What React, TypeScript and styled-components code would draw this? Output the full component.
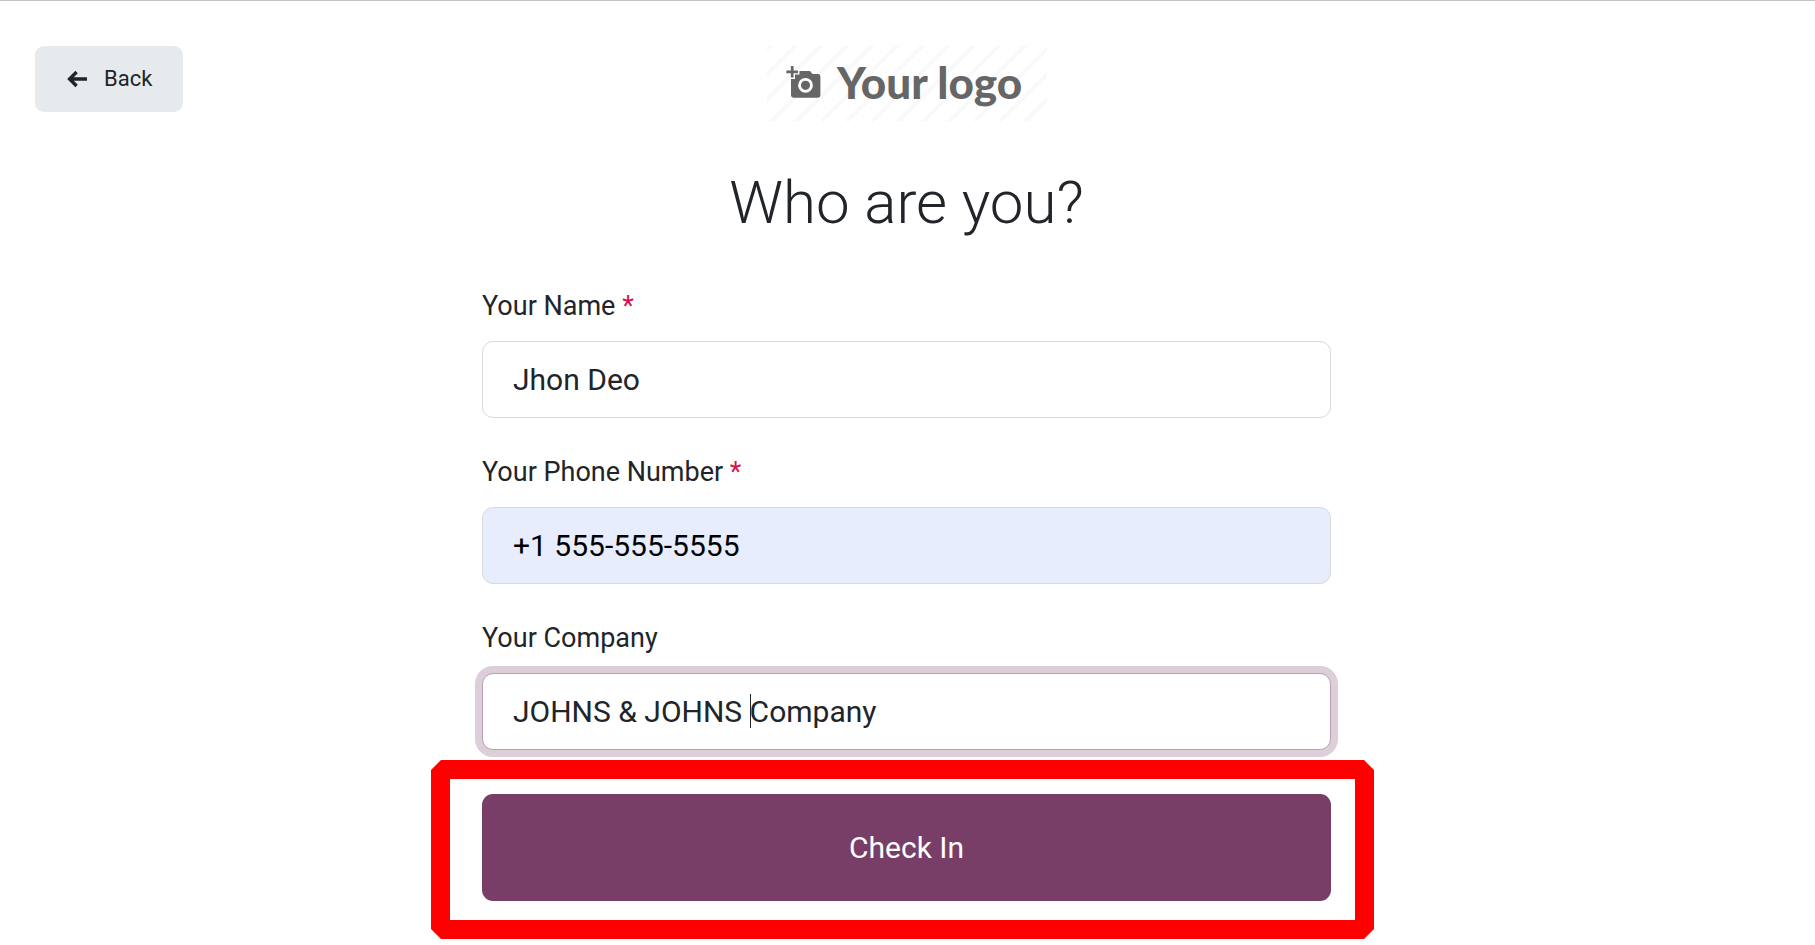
import React, { useEffect, useRef, useState } from "react";
import styled, { createGlobalStyle } from "styled-components";

const GlobalStyle = createGlobalStyle`
  *, *::before, *::after { box-sizing: border-box; }
  body {
    margin: 0;
    background: #fff;
    color: #212529;
    font-family: Roboto, "Noto Sans", sans-serif;
  }
  button, input { font-family: inherit; }
`;

const Page = styled.div`
  min-height: 100vh;
  border-top: 1px solid #c2c2c2;
  padding: 45px 37px 44px 35px;
`;

const Header = styled.header`
  display: grid;
  grid-template-columns: 1fr auto 1fr;
  align-items: start;
`;

const BackButton = styled.button`
  justify-self: start;
  display: flex;
  align-items: center;
  gap: 16px;
  height: 66px;
  padding: 0 31px;
  border: 0;
  border-radius: 9px;
  background: #e7eaed;
  color: #212529;
  font-size: 22px;
  line-height: 32px;
  cursor: pointer;
`;

const Logo = styled.div`
  display: flex;
  align-items: center;
  justify-content: center;
  gap: 16px;
  width: 280px;
  height: 75px;
  padding: 0 6px 4px 0;
  background: repeating-linear-gradient(135deg, #f9f9f9 0 4px, transparent 4px 18px);
  color: #666;
`;

const LogoText = styled.span`
  font-family: Lato, sans-serif;
  font-size: 44px;
  font-weight: 900;
  line-height: 48px;
`;

const Main = styled.main`
  max-width: 849px;
  margin: 46px auto 0;
`;

const Title = styled.h1`
  margin: 0 0 48px;
  font-size: 60px;
  font-weight: 300;
  line-height: 72px;
  text-align: center;
`;

const Form = styled.form`
  display: flex;
  flex-direction: column;
  gap: 35px;
`;

const Field = styled.div`
  display: flex;
  flex-direction: column;
  gap: 16px;
`;

const Label = styled.label`
  font-size: 27px;
  line-height: 38px;
`;

const Required = styled.span`
  color: #d6104a;
`;

const InputWrap = styled.div`
  position: relative;
`;

const Input = styled.input<{ $autofilled?: boolean }>`
  display: block;
  width: 100%;
  height: 77px;
  padding: 0 30px;
  border: 1px solid #d8dadd;
  border-radius: 11px;
  outline: 0;
  background: ${(p) => (p.$autofilled ? "#e8edfe" : "#fff")};
  color: ${(p) => (p.$autofilled ? "#000" : "#212529")};
  font-size: 30px;
  caret-color: transparent;

  &:focus {
    border-color: #b89fb3;
    box-shadow: 0 0 0 7px #dccfd9;
  }
`;

const Caret = styled.span`
  position: absolute;
  top: 21px;
  width: 1px;
  height: 34px;
  background: #212529;
  pointer-events: none;
`;

const Action = styled.div`
  position: relative;
  margin-top: 9px;
`;

const SubmitButton = styled.button`
  display: block;
  width: 100%;
  height: 107px;
  border: 0;
  border-radius: 11px;
  background: #783e67;
  color: #fff;
  font-size: 30px;
  line-height: 42px;
  cursor: pointer;
`;

const Highlight = styled.div`
  position: absolute;
  inset: -34px -43px -38px -51px;
  border: 19px solid #f00;
  clip-path: polygon(
    10px 0, calc(100% - 10px) 0, 100% 10px, 100% calc(100% - 10px),
    calc(100% - 10px) 100%, 10px 100%, 0 calc(100% - 10px), 0 10px
  );
  pointer-events: none;
`;

function ArrowLeft() {
  return (
    <svg width="22" height="18" viewBox="0 0 22 18" fill="none" stroke="currentColor" strokeWidth="3.4" aria-hidden="true">
      <path d="M21 9H4M10.6 2L3.6 9l7 7" />
    </svg>
  );
}

function CameraPlus() {
  return (
    <svg width="36" height="34" viewBox="0 0 36 34" aria-hidden="true">
      <path
        fill="currentColor"
        d="M14 6h11l2.500 3h5.500a2.400 2.400 0 0 1 2.400 2.400v18.900a2.400 2.400 0 0 1-2.400 2.400H8.400A2.400 2.400 0 0 1 6 30.300V9h8z"
      />
      <circle cx="20.500" cy="20.300" r="6" fill="currentColor" stroke="#fff" strokeWidth="2.800" />
      <path d="M7.200 0v14M0 6.800h14.400" stroke="#fff" strokeWidth="5.600" />
      <path d="M7.200 1v11.600M1.400 6.800H13" stroke="currentColor" strokeWidth="2.700" />
    </svg>
  );
}

interface TextFieldProps {
  id: string;
  label: string;
  type?: string;
  value: string;
  required?: boolean;
  autofilled?: boolean;
  caretAt?: number;
}

function TextField({ id, label, type = "text", value, required, autofilled, caretAt }: TextFieldProps) {
  const [text, setText] = useState(value);
  const [caret, setCaret] = useState<number | null>(null);
  const ref = useRef<HTMLInputElement>(null);

  const placeCaret = () => {
    const el = ref.current;
    const ctx = document.createElement("canvas").getContext("2d");
    if (!el || !ctx) return;
    const style = getComputedStyle(el);
    ctx.font = `${style.fontSize} ${style.fontFamily}`;
    const before = el.value.slice(0, el.selectionStart ?? 0);
    setCaret(Math.round(31 + ctx.measureText(before).width - el.scrollLeft));
  };

  useEffect(() => {
    if (caretAt === undefined || !ref.current) return;
    ref.current.focus();
    ref.current.setSelectionRange(caretAt, caretAt);
    placeCaret();
  }, [caretAt]);

  return (
    <Field>
      <Label htmlFor={id}>
        {label}
        {required && <Required> *</Required>}
      </Label>
      <InputWrap>
        <Input
          ref={ref}
          id={id}
          type={type}
          value={text}
          required={required}
          $autofilled={autofilled}
          onChange={(e) => setText(e.target.value)}
          onSelect={placeCaret}
          onBlur={() => setCaret(null)}
        />
        {caret !== null && <Caret style={{ left: caret }} />}
      </InputWrap>
    </Field>
  );
}

export default function App() {
  return (
    <>
      <GlobalStyle />
      <Page>
        <Header>
          <BackButton type="button">
            <ArrowLeft />
            Back
          </BackButton>
          <Logo>
            <CameraPlus />
            <LogoText>Your logo</LogoText>
          </Logo>
        </Header>
        <Main>
          <Title>Who are you?</Title>
          <Form onSubmit={(e) => e.preventDefault()}>
            <TextField id="name" label="Your Name" value="Jhon Deo" required />
            <TextField id="phone" label="Your Phone Number" type="tel" value="+1 555-555-5555" required autofilled />
            <TextField id="company" label="Your Company" value="JOHNS & JOHNS Company" caretAt={14} />
            <Action>
              <SubmitButton type="submit">Check In</SubmitButton>
              <Highlight />
            </Action>
          </Form>
        </Main>
      </Page>
    </>
  );
}
